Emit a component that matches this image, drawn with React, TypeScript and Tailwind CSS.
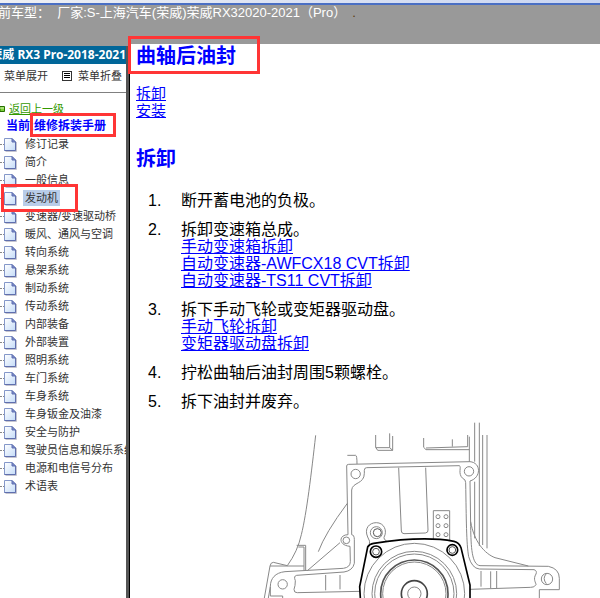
import type { ReactNode } from "react";

interface Step {
  text: string;
  links?: string[];
}

const CHAPTERS = [
  "修订记录", "简介", "一般信息", "发动机", "变速器/变速驱动桥",
  "暖风、通风与空调", "转向系统", "悬架系统", "制动系统", "传动系统",
  "内部装备", "外部装置", "照明系统", "车门系统", "车身系统",
  "车身钣金及油漆", "安全与防护", "驾驶员信息和娱乐系统", "电源和电信号分布", "术语表",
];

const ACTIVE = "发动机";

const STEPS: Step[] = [
  { text: "断开蓄电池的负极。" },
  { text: "拆卸变速箱总成。", links: ["手动变速箱拆卸", "自动变速器-AWFCX18 CVT拆卸", "自动变速器-TS11 CVT拆卸"] },
  { text: "拆下手动飞轮或变矩器驱动盘。", links: ["手动飞轮拆卸", "变矩器驱动盘拆卸"] },
  { text: "拧松曲轴后油封周围5颗螺栓。" },
  { text: "拆下油封并废弃。" },
];

export default function App() {
  return (
    <div className={`h-screen flex flex-col overflow-hidden bg-[#999999] ${sans}`}>
      <div className="h-[3px] shrink-0 bg-gradient-to-r from-[#eef0f4] to-[#c9d5f2]" />
      <div className="h-0.5 shrink-0 bg-[#4a6fc4]" />
      <header className="h-[39px] shrink-0 flex items-start text-[13px] leading-4 text-white whitespace-pre">
        <p className="-ml-0.5">前车型：  厂家:S-上海汽车(荣威)荣威RX32020-2021（Pro）</p>
        <span className="ml-1.5 text-[#5a3a10]">.</span>
      </header>

      <div className="flex-1 min-h-0 flex">
        <Sidebar />
        <div className="w-1 mt-0.5 shrink-0 bg-[#555555] border-r border-black" />
        <Manual />
      </div>
    </div>
  );
}

function Sidebar() {
  return (
    <aside className="w-[126px] mt-0.5 shrink-0 flex flex-col overflow-hidden bg-white text-[11px] text-[#333333] whitespace-nowrap">
      <h2 className={`h-[18px] shrink-0 flex items-center justify-end bg-[#006699] text-white text-xs font-bold ${title}`}>
        <span>荣威 RX3 Pro-2018-2021</span>
      </h2>
      <div className="h-[29px] shrink-0 flex items-center pl-1 pb-1 border-b border-[#808080]">
        <button type="button">菜单展开</button>
        <svg viewBox="0 0 10 10" className="w-2.5 h-2.5 ml-3.5 mr-1.5" shapeRendering="crispEdges" aria-hidden="true">
          <rect x="0.5" y="0.5" width="9" height="9" fill="#fff" stroke="#333" />
          <path d="M2 3h6M2 5h6M2 7h6" transform="translate(0 -.5)" stroke="#000" />
        </svg>
        <button type="button">菜单折叠</button>
      </div>

      <nav className="pt-2 leading-[18px]">
        <a href="#" className="flex items-center h-4 text-[#339900]">
          <svg viewBox="0 0 9 6" className="w-[9px] h-1.5 shrink-0" aria-hidden="true">
            <path d="M0 .5h4.500v5H0z" fill="#7fd13b" stroke="#267000" />
            <path d="M0 2h4" stroke="#d5f5b0" />
          </svg>
          <span className="underline">返回上一级</span>
        </a>
        <p className="h-[18px] pl-1.5 text-xs leading-[18px] font-bold text-[#0000ff]">
          当前:<Mark frame="-left-1 -right-2.5 -top-1 -bottom-0.5">维修拆装手册</Mark>
        </p>
        <ul>
          {CHAPTERS.map((c) => (
            <li key={c} className="h-[18px] flex items-center">
              <span className="w-1 shrink-0 border-t border-dotted border-[#888888]" />
              {c === ACTIVE ? (
                <span className="relative flex items-center">
                  <PageIcon />
                  <a href="#" className="ml-1.5 px-0.5 h-4 leading-4 bg-[#b9cde9]">{c}</a>
                  <span className="absolute -left-[3px] -right-[18px] -top-1.5 -bottom-1.5 border-3 border-[#ff3535]" />
                </span>
              ) : (
                <>
                  <PageIcon />
                  <a href="#" className="ml-2">{c}</a>
                </>
              )}
            </li>
          ))}
        </ul>
      </nav>
    </aside>
  );
}

function Manual() {
  return (
    <main className="flex-1 min-w-0 bg-white pl-1.5 text-base leading-[17px] text-black">
      <h1 className="text-xl leading-6 font-bold text-[#0000ff]">
        <Mark frame="-left-2 -right-6 -top-2 -bottom-1.5">曲轴后油封</Mark>
      </h1>
      <div className="mt-[17px] flex flex-col items-start text-[15px]">
        <a href="#remove" className={link}>拆卸</a>
        <a href="#install" className={link}>安装</a>
      </div>
      <h2 id="remove" className="mt-7 text-xl leading-6 font-bold text-[#0000ff]">拆卸</h2>
      <ol className="mt-[21px] pl-3 space-y-3">
        {STEPS.map((s, i) => (
          <li key={s.text} className="flex">
            <span className="w-[33px] shrink-0">{i + 1}.</span>
            <div className="flex flex-col items-start">
              <span>{s.text}</span>
              {s.links?.map((l) => <a key={l} href="#" className={link}>{l}</a>)}
            </div>
          </li>
        ))}
      </ol>
      <Housing />
    </main>
  );
}

// Red frame drawn round a piece of text
function Mark({ frame, children }: { frame: string; children: ReactNode }) {
  return (
    <span className="relative inline-block">
      {children}
      <span className={`absolute border-3 border-[#ff3535] ${frame}`} />
    </span>
  );
}

function PageIcon() {
  return (
    <svg viewBox="0 0 13 15" className="w-[13px] h-[15px] shrink-0" aria-hidden="true">
      <defs>
        <linearGradient id="sheet" x1="0" y1="0" x2="1" y2="1">
          <stop offset="0" stopColor="#ffffff" />
          <stop offset="1" stopColor="#c5dcf8" />
        </linearGradient>
      </defs>
      <path d="M1.500 14.500h11V5" fill="none" stroke="#c4c4cf" />
      <path d="M.5 1.500h7.500l3.500 3.500v8.500H.5z" fill="url(#sheet)" stroke="#8497c9" />
      <path d="M8 1.500V5h3.500z" fill="#7d8ccb" stroke="#5f6fb0" />
      <path d="M11.500 5v8.500H.5" fill="none" stroke="#5f6fae" />
    </svg>
  );
}

// Rear face of the engine block with the oil seal retainer
function Housing() {
  return (
    <svg viewBox="0 0 1050 564" className="block w-[350px] h-[188px] ml-[114px]" fill="none" stroke="#888" strokeWidth="3" role="img" aria-label="曲轴后油封">
      {/* block outline, left */}
      <path d="M197 76C184 190 170 310 154 374Q143 424 112 467L70 457Q62 457 60 468L43 564" />
      <path d="M140 406H167V481M145 411H162V481M60 468H162" />
      <path d="M292 280Q225 370 205 425M270 398L172 482" />
      <path d="M292 136H317Q321 136 321 162" />
      {/* top slots */}
      <path d="M377 75V112L383 121H428V78M419 70V113H377M419 113L428 121M521 84V112L528 119H658M607 88V110M528 114L653 110V75M658 80V155" />
      <path d="M674 38V155M688 38V408M698 75V405M711 75V415M674 215V385" />
      {/* gasket flange */}
      <path d="M294 374L290 168Q290 163 296 163L660 155C694 158 694 203 660 213L662 350C663 410 665 464 690 467L895 469Q928 476 928 505V539H868V564" />
      <path d="M305 374V240C307 216 343 223 343 190V181Q343 173 350 173L628 167C636 170 622 190 638 205Q647 208 647 218C649 330 649 400 656 440Q666 475 688 477L852 479Q862 482 858 492C848 508 858 518 858 524Q853 533 842 532L660 538" />
      <path d="M294 374C266 374 264 406 300 409L301 455Q301 472 280 475L105 485C76 488 61 505 61 530V558H98V564" />
      <path d="M305 374C310 374 313 380 313 388V460Q308 482 282 486L140 496Q130 498 136 512Q136 528 132 538Q132 549 142 548L330 544" />
      <path d="M61 530L55 564" />
      <path d="M662 335C672 395 704 431 735 443L835 468" />
      <circle cx="317" cy="192" r="14" />
      <circle cx="657" cy="184" r="14" />
      <circle cx="289" cy="391" r="10" />
      <circle cx="98" cy="523" r="14" />
      <circle cx="891" cy="507" r="17" />
      <path d="M889 491Q876 505 889 521" />
      {/* oil gallery panel */}
      <path d="M446 173L454 363Q455 371 462 371L526 369Q535 368 534 360L527 173" />
      <path d="M550 388V302H599V392" />
      {[320, 347, 374].map((y) => (
        <g key={y}>
          <circle cx="564" cy={y} r="6" />
          <circle cx="588" cy={y} r="6" />
        </g>
      ))}
      <path d="M227 495V541M270 495V538M693 483V530M722 484V535M740 483V534" />
      {/* dowel boss */}
      <path d="M358 405Q362 394 353 381C342 356 357 338 379 338C402 338 413 362 402 382Q400 388 410 393" />
      <circle cx="379" cy="368" r="18" />
      <circle cx="382" cy="368" r="12" stroke="#555" />
      {/* seal retainer */}
      <g stroke="#000" strokeWidth="5">
        <path d="M331 564L329 530L353 411Q358 402 371 400Q520 377 612 394Q628 398 633 413L660 525V564" />
        <circle cx="378" cy="425" r="17" />
        <circle cx="607" cy="420" r="16" />
      </g>
      <circle cx="378" cy="425" r="10" stroke="#555" />
      <circle cx="607" cy="420" r="10" stroke="#555" />
      <circle cx="493" cy="551" r="151" />
      <circle cx="493" cy="551" r="127" />
      <circle cx="493" cy="551" r="119" />
      <circle cx="493" cy="551" r="101" stroke="#555" strokeWidth="5" />
      <circle cx="493" cy="551" r="95" />
      <circle cx="493" cy="551" r="39" stroke="#444" strokeWidth="5" />
      <circle cx="493" cy="551" r="20" />
    </svg>
  );
}

const sans = "font-['Liberation_Sans','Noto_Sans_CJK_SC',sans-serif]";
const title = "font-['Noto_Sans','Noto_Sans_CJK_SC',sans-serif]";
const link = "text-[#0000ff] underline";
